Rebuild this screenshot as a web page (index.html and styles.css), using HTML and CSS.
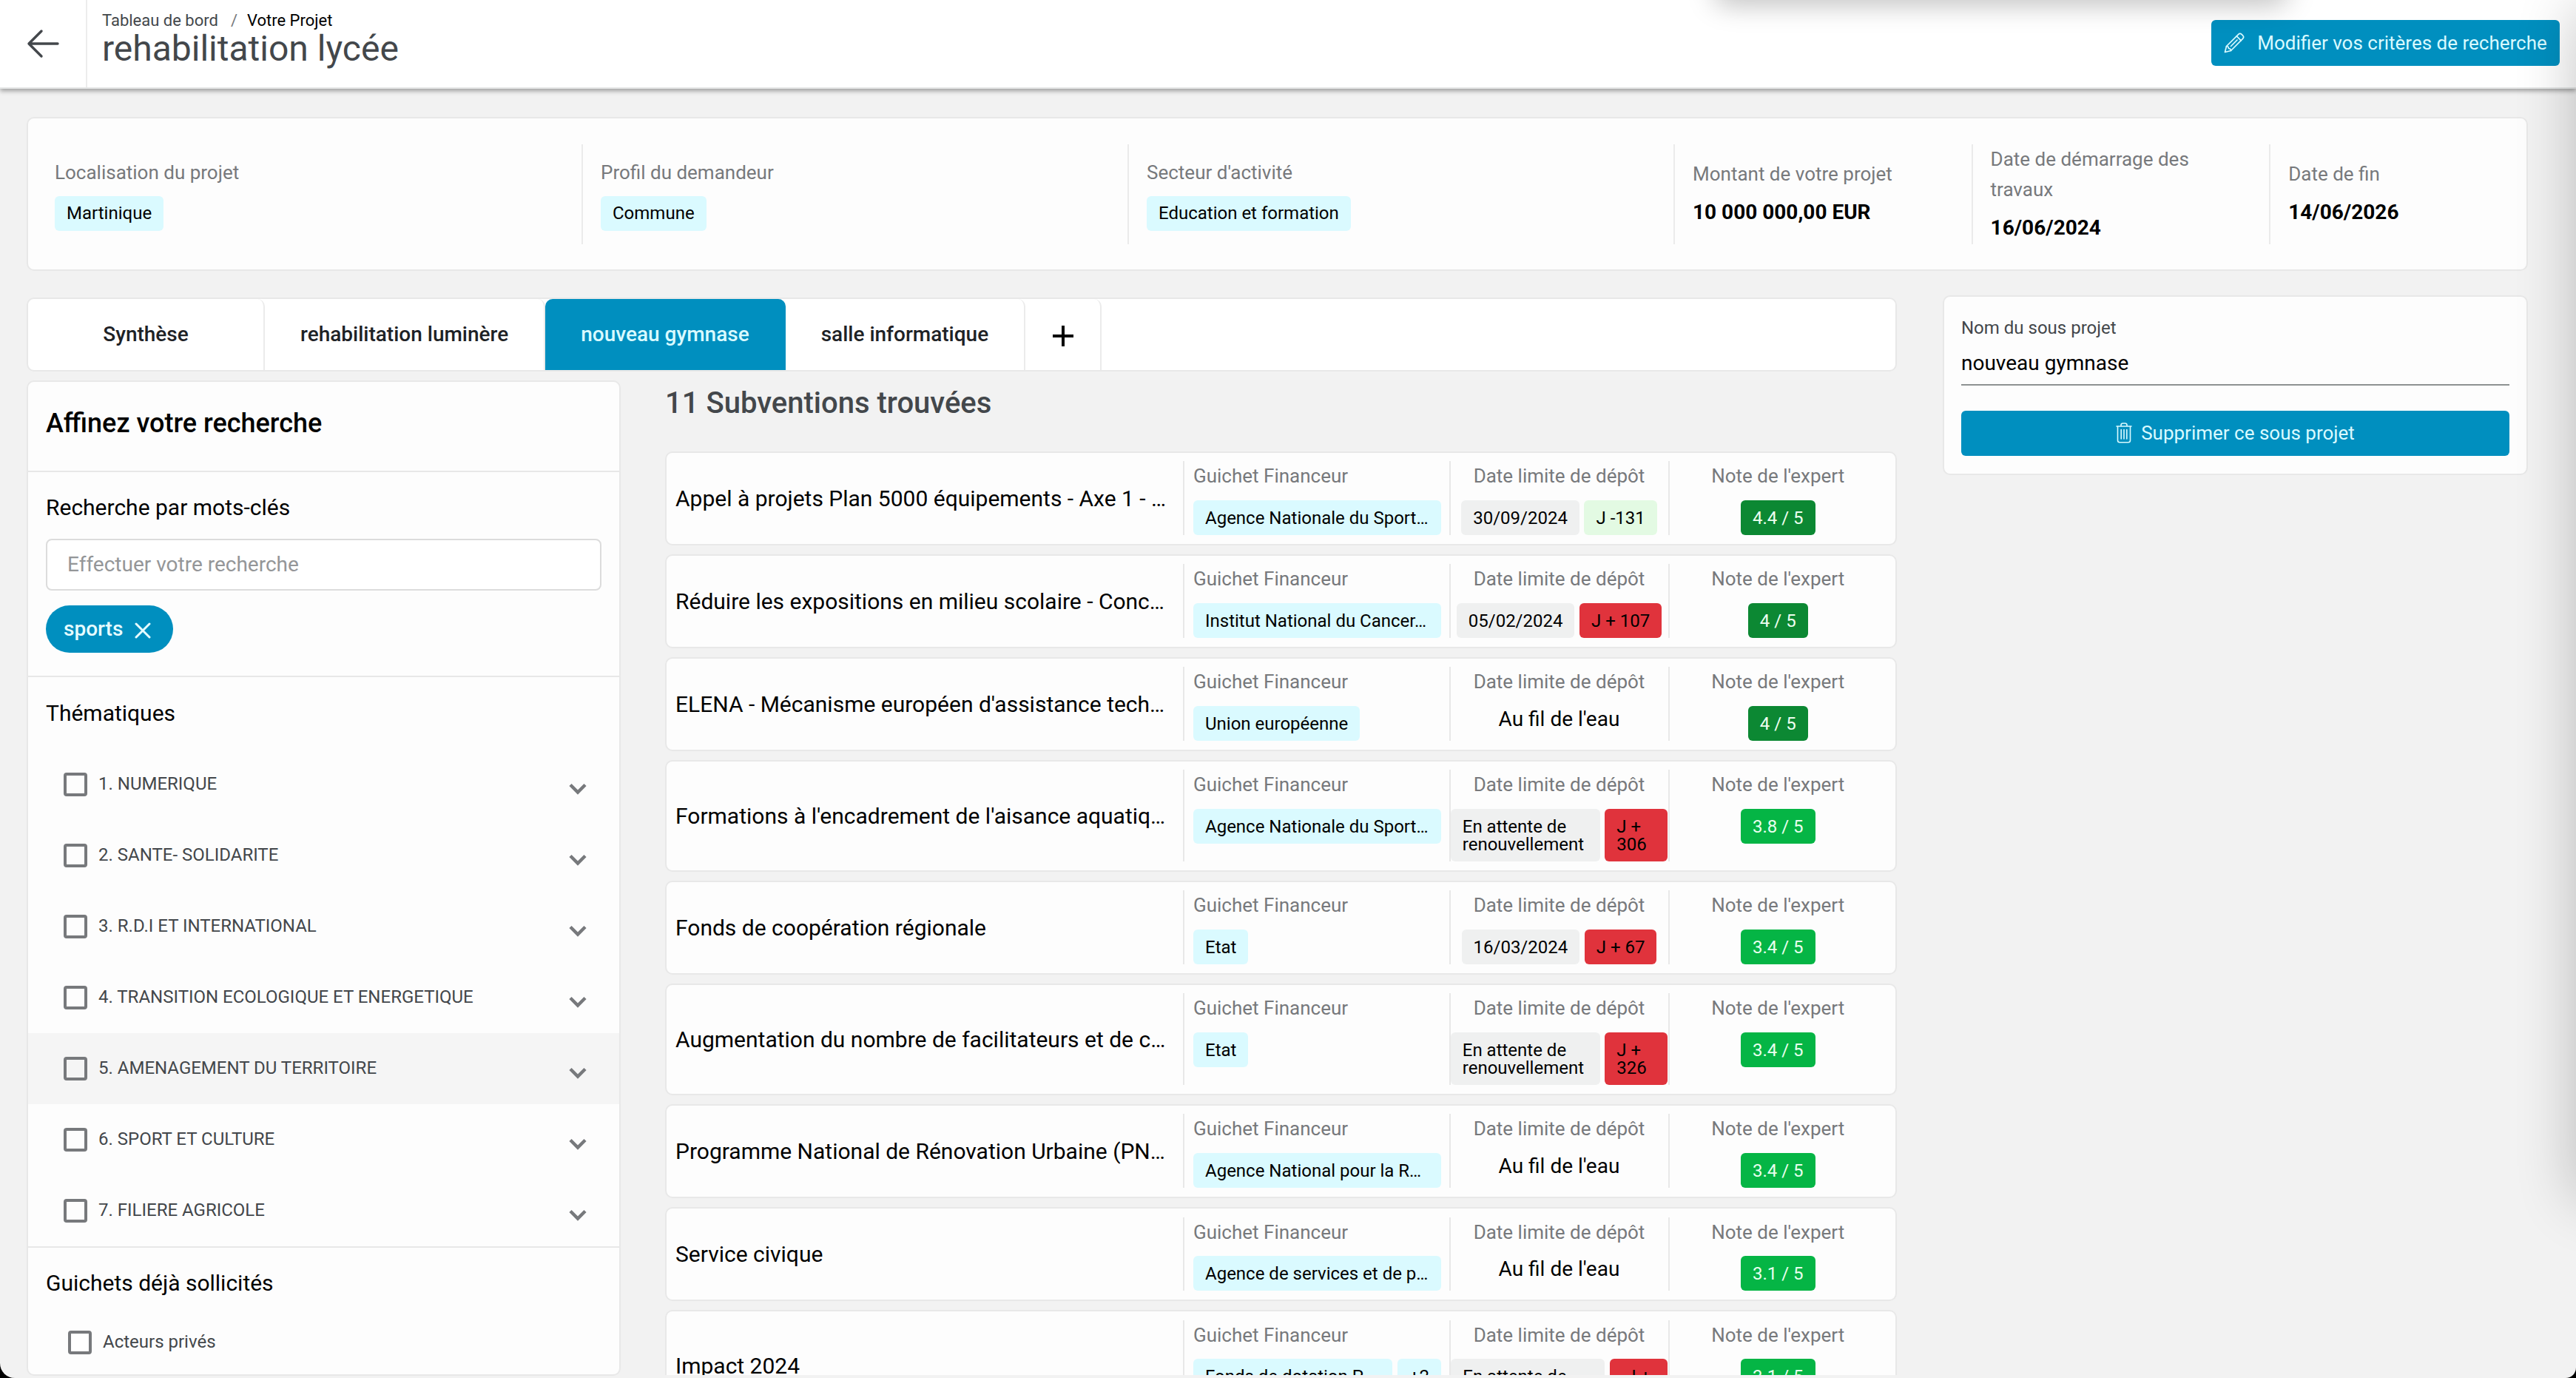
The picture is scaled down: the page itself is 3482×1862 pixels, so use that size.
FILE: index.html
```html
<!DOCTYPE html>
<html lang="fr">
<head>
  <meta charset="UTF-8">
  <meta name="viewport" content="width=device-width, initial-scale=1.0">
  <title>rehabilitation lycée - Votre Projet</title>
  <link rel="stylesheet" href="styles.css">
</head>
<body>
  <div class="page">
    <header class="topbar">
      <a class="back" href="#" aria-label="Retour">
        <svg width="44" height="40" viewBox="0 0 44 40" fill="none" stroke="#43474b" stroke-width="3.4" stroke-linecap="round" stroke-linejoin="round">
          <path d="M42 20H3M20 3L3 20l17 17"/>
        </svg>
      </a>
      <div class="titles">
        <nav class="breadcrumb"><span>Tableau de bord</span><span class="sep">/</span><span class="current">Votre Projet</span></nav>
        <h1>rehabilitation lycée</h1>
      </div>
      <button class="btn btn-edit">
        <svg width="28" height="28" viewBox="0 0 28 28" fill="none" stroke="#d9faff" stroke-width="1.7" stroke-linejoin="round" stroke-linecap="round">
          <path d="M1.500 26.500l2-8L19.500 2.600c1.500-1.500 3.500-1.200 4.800 0l1.200 1.200c1.300 1.300 1.300 3.300 0 4.600L9.500 24.500z"/>
          <path d="M17.300 4.800l6 6M3.500 18.500c1.700 0 3 .6 3 3 2 0 3 1.200 3 3M9.500 18.500l8.500-8.500"/>
        </svg>
        <span>Modifier vos critères de recherche</span>
      </button>
    </header>

    <section class="card summary">
      <div class="summary-item">
        <div class="label">Localisation du projet</div>
        <span class="badge cyan">Martinique</span>
      </div>
      <div class="summary-item">
        <div class="label">Profil du demandeur</div>
        <span class="badge cyan">Commune</span>
      </div>
      <div class="summary-item">
        <div class="label">Secteur d'activité</div>
        <span class="badge cyan">Education et formation</span>
      </div>
      <div class="summary-item">
        <div class="label">Montant de votre projet</div>
        <strong>10 000 000,00 EUR</strong>
      </div>
      <div class="summary-item">
        <div class="label">Date de démarrage des travaux</div>
        <strong>16/06/2024</strong>
      </div>
      <div class="summary-item">
        <div class="label">Date de fin</div>
        <strong>14/06/2026</strong>
      </div>
    </section>

    <div class="columns">
      <main class="main">
        <nav class="card tabs">
          <a class="tab first">Synthèse</a>
          <a class="tab">rehabilitation luminère</a>
          <a class="tab active">nouveau gymnase</a>
          <a class="tab">salle informatique</a>
          <a class="tab add" aria-label="Ajouter">
            <svg width="28" height="28" viewBox="0 0 28 28" stroke="#000" stroke-width="4"><path d="M14 0v28M0 14h28"/></svg>
          </a>
        </nav>

        <div class="results">
          <aside class="card filters">
            <h2>Affinez votre recherche</h2>

            <div class="filter-search">
              <h3>Recherche par mots-clés</h3>
              <input class="search" type="text" placeholder="Effectuer votre recherche">
              <span class="chip">sports
                <svg width="22" height="22" viewBox="0 0 22 22" stroke="#e6fcff" stroke-width="3" stroke-linecap="round"><path d="M2 2l18 18M20 2L2 20"/></svg>
              </span>
            </div>

            <div class="filter-themes">
              <h3>Thématiques</h3>
              <ul>
                <li><i class="check"></i><span>1. NUMERIQUE</span><svg class="chevron" viewBox="0 0 24 16"><path d="M2 2.500l10 10 10-10"/></svg></li>
                <li><i class="check"></i><span>2. SANTE- SOLIDARITE</span><svg class="chevron" viewBox="0 0 24 16"><path d="M2 2.500l10 10 10-10"/></svg></li>
                <li><i class="check"></i><span>3. R.D.I ET INTERNATIONAL</span><svg class="chevron" viewBox="0 0 24 16"><path d="M2 2.500l10 10 10-10"/></svg></li>
                <li><i class="check"></i><span>4. TRANSITION ECOLOGIQUE ET ENERGETIQUE</span><svg class="chevron" viewBox="0 0 24 16"><path d="M2 2.500l10 10 10-10"/></svg></li>
                <li class="hover"><i class="check"></i><span>5. AMENAGEMENT DU TERRITOIRE</span><svg class="chevron" viewBox="0 0 24 16"><path d="M2 2.500l10 10 10-10"/></svg></li>
                <li><i class="check"></i><span>6. SPORT ET CULTURE</span><svg class="chevron" viewBox="0 0 24 16"><path d="M2 2.500l10 10 10-10"/></svg></li>
                <li><i class="check"></i><span>7. FILIERE AGRICOLE</span><svg class="chevron" viewBox="0 0 24 16"><path d="M2 2.500l10 10 10-10"/></svg></li>
              </ul>
            </div>

            <div class="filter-desks">
              <h3>Guichets déjà sollicités</h3>
              <div class="desk"><i class="check"></i><span>Acteurs privés</span></div>
            </div>
          </aside>

          <section class="list">
            <h2>11 Subventions trouvées</h2>

            <article class="card grant">
              <div class="name">Appel à projets Plan 5000 équipements - Axe 1 - …</div>
              <div class="funder"><div class="label">Guichet Financeur</div><div class="badges"><span class="badge cyan full">Agence Nationale du Sport…</span></div></div>
              <div class="deadline"><div class="label">Date limite de dépôt</div><div class="badges"><span class="badge grey">30/09/2024</span><span class="badge mint">J -131</span></div></div>
              <div class="score"><div class="label">Note de l'expert</div><span class="badge dark-green">4.4 / 5</span></div>
            </article>

            <article class="card grant">
              <div class="name">Réduire les expositions en milieu scolaire - Conc…</div>
              <div class="funder"><div class="label">Guichet Financeur</div><div class="badges"><span class="badge cyan full">Institut National du Cancer…</span></div></div>
              <div class="deadline"><div class="label">Date limite de dépôt</div><div class="badges"><span class="badge grey">05/02/2024</span><span class="badge red">J + 107</span></div></div>
              <div class="score"><div class="label">Note de l'expert</div><span class="badge dark-green">4 / 5</span></div>
            </article>

            <article class="card grant">
              <div class="name">ELENA - Mécanisme européen d'assistance tech…</div>
              <div class="funder"><div class="label">Guichet Financeur</div><div class="badges"><span class="badge cyan">Union européenne</span></div></div>
              <div class="deadline"><div class="label">Date limite de dépôt</div><p>Au fil de l'eau</p></div>
              <div class="score"><div class="label">Note de l'expert</div><span class="badge dark-green">4 / 5</span></div>
            </article>

            <article class="card grant">
              <div class="name">Formations à l'encadrement de l'aisance aquatiq…</div>
              <div class="funder"><div class="label">Guichet Financeur</div><div class="badges"><span class="badge cyan full">Agence Nationale du Sport…</span></div></div>
              <div class="deadline"><div class="label">Date limite de dépôt</div><div class="badges"><span class="badge grey wait">En attente de renouvellement</span><span class="badge red late">J + 306</span></div></div>
              <div class="score"><div class="label">Note de l'expert</div><span class="badge green">3.8 / 5</span></div>
            </article>

            <article class="card grant">
              <div class="name">Fonds de coopération régionale</div>
              <div class="funder"><div class="label">Guichet Financeur</div><div class="badges"><span class="badge cyan">Etat</span></div></div>
              <div class="deadline"><div class="label">Date limite de dépôt</div><div class="badges"><span class="badge grey">16/03/2024</span><span class="badge red">J + 67</span></div></div>
              <div class="score"><div class="label">Note de l'expert</div><span class="badge green">3.4 / 5</span></div>
            </article>

            <article class="card grant">
              <div class="name">Augmentation du nombre de facilitateurs et de c…</div>
              <div class="funder"><div class="label">Guichet Financeur</div><div class="badges"><span class="badge cyan">Etat</span></div></div>
              <div class="deadline"><div class="label">Date limite de dépôt</div><div class="badges"><span class="badge grey wait">En attente de renouvellement</span><span class="badge red late">J + 326</span></div></div>
              <div class="score"><div class="label">Note de l'expert</div><span class="badge green">3.4 / 5</span></div>
            </article>

            <article class="card grant">
              <div class="name">Programme National de Rénovation Urbaine (PN…</div>
              <div class="funder"><div class="label">Guichet Financeur</div><div class="badges"><span class="badge cyan full">Agence National pour la R…</span></div></div>
              <div class="deadline"><div class="label">Date limite de dépôt</div><p>Au fil de l'eau</p></div>
              <div class="score"><div class="label">Note de l'expert</div><span class="badge green">3.4 / 5</span></div>
            </article>

            <article class="card grant">
              <div class="name">Service civique</div>
              <div class="funder"><div class="label">Guichet Financeur</div><div class="badges"><span class="badge cyan full">Agence de services et de p…</span></div></div>
              <div class="deadline"><div class="label">Date limite de dépôt</div><p>Au fil de l'eau</p></div>
              <div class="score"><div class="label">Note de l'expert</div><span class="badge green">3.1 / 5</span></div>
            </article>

            <article class="card grant">
              <div class="name">Impact 2024</div>
              <div class="funder"><div class="label">Guichet Financeur</div><div class="badges"><span class="badge cyan full">Fonds de dotation P…</span><span class="badge cyan">+2</span></div></div>
              <div class="deadline"><div class="label">Date limite de dépôt</div><div class="badges"><span class="badge grey wait wide">En attente de renouvellement</span><span class="badge red late short">J + 5</span></div></div>
              <div class="score"><div class="label">Note de l'expert</div><span class="badge green">3.1 / 5</span></div>
            </article>
          </section>
        </div>
      </main>

      <aside class="card subproject">
        <label for="subname">Nom du sous projet</label>
        <input id="subname" type="text" value="nouveau gymnase">
        <button class="btn btn-delete">
          <svg width="22" height="28" viewBox="0 0 22 28" fill="none" stroke="#d9faff" stroke-width="1.600" stroke-linecap="round">
            <path d="M1 5h20M7 5V3.500C7 2 8 1 9.500 1h3C14 1 15 2 15 3.500V5M2.500 5v19c0 1.700 1 2.800 2.800 2.800h11.400c1.800 0 2.800-1.100 2.800-2.800V5M7.200 9.500v12.500M11 9.500v12.500M14.800 9.500v12.500"/>
          </svg>
          <span>Supprimer ce sous projet</span>
        </button>
      </aside>
    </div>

    <div class="overlay-top"></div>
    <div class="overlay-right"></div>
  </div>
</body>
</html>
```
FILE: styles.css
```css
* {
  box-sizing: border-box;
}
html {
  background: #000;
}
body {
  margin: 0;
  font-family: Roboto, sans-serif;
  font-size: 28px;
  line-height: 1.5715;
  color: #000;
}
h1, h2, h3, p, ul {
  margin: 0;
  padding: 0;
}
button, input {
  font-family: inherit;
}
.page {
  position: relative;
  height: 1862px;
  overflow: hidden;
  background: #f2f2f2;
  border-radius: 0 0 14px 20px;
}

/* Header */
.topbar {
  display: flex;
  align-items: center;
  height: 120px;
  background: #fff;
  border-bottom: 2px solid #e4e6e6;
  box-shadow: 0 3px 6px rgba(0, 0, 0, 0.35);
  padding-right: 22px;
}
.back {
  display: flex;
  align-items: center;
  width: 118px;
  height: 118px;
  padding-left: 36px;
  border-right: 2px solid #ececec;
}
.titles {
  flex: 1;
  align-self: flex-start;
  padding: 11px 0 0 20px;
}
.breadcrumb {
  font-size: 22px;
  line-height: 34px;
  color: #43474b;
}
.breadcrumb .sep {
  margin: 0 13px 0 17px;
  color: #77797c;
}
.breadcrumb .current {
  color: #000;
}
h1 {
  font-size: 48px;
  line-height: 42px;
  font-weight: 400;
  color: #43474b;
}
.btn {
  display: flex;
  align-items: center;
  justify-content: center;
  border: none;
  border-radius: 6px;
  background: #008fbf;
  color: #d9faff;
  font-size: 26px;
  cursor: pointer;
}
.btn-edit {
  width: 471px;
  height: 62px;
  gap: 17px;
  margin-bottom: 3px;
}

/* Cards */
.card {
  background: #fdfdfd;
  border: 2px solid #e8e8e8;
  border-radius: 10px;
}
.label {
  font-size: 26px;
  color: #77797c;
}
.badge {
  display: inline-block;
  padding: 11.5px 16px;
  border-radius: 6px;
  font-size: 24px;
  line-height: 24px;
  white-space: nowrap;
}
.cyan { background: #dafaff; }
.grey { background: #eff0f0; }
.mint { background: #e3fae3; }
.red { background: #e0333c; }
.dark-green { background: #0c8833; color: #eefff0; }
.green { background: #05b545; color: #e8ffee; }

.summary {
  display: grid;
  grid-template-columns: 740px 738px 738px 402.600px 402.600px 1fr;
  margin: 38px 65px 0 36px;
  padding: 35px 0 34px 10px;
}
.summary-item {
  display: flex;
  flex-direction: column;
  justify-content: center;
  align-items: flex-start;
  padding: 0 24px;
  border-right: 2px solid #ebebeb;
}
.summary-item:first-child {
  padding-left: 26px;
}
.summary-item:last-child {
  border-right: none;
}
.summary-item .badge {
  margin-top: 11px;
}
.summary-item strong {
  margin-top: 9px;
}

.columns {
  display: flex;
  align-items: flex-start;
  margin: 33px 65px 0 36px;
}
.main {
  width: 2528px;
  margin: 3px 62px 0 0;
}

/* Tabs */
.tabs {
  display: flex;
  height: 100px;
  background: #fff;
}
.tab {
  display: flex;
  align-items: center;
  padding: 0 48px;
  border-right: 2px solid #ebebeb;
  border-radius: 10px 10px 0 0;
  font-weight: 500;
  color: #1e2226;
}
.tab.first {
  width: 320px;
  justify-content: center;
}
.tab.active {
  padding-right: 47px;
  background: #008fbf;
  border-color: #008fbf;
  color: #d9faff;
}
.tab.add {
  padding: 4px 36px 0 37px;
}

.results {
  display: flex;
  align-items: flex-start;
  margin-top: 12px;
}

/* Filters */
.filters {
  width: 803px;
  height: 1345px;
  margin-right: 60px;
}
.filters h2 {
  height: 122px;
  padding: 31px 24px 0;
  font-size: 36px;
  line-height: 50px;
  font-weight: 500;
  border-bottom: 2px solid #e8e8e8;
}
.filters h3 {
  padding-left: 24px;
  font-size: 30px;
  line-height: 46px;
  font-weight: 400;
}
.filter-search {
  height: 277px;
  padding-top: 25px;
  border-bottom: 2px solid #e8e8e8;
}
.search {
  display: block;
  width: 751px;
  height: 70px;
  margin: 19px 0 20px 24px;
  padding: 0 27px;
  border: 2px solid #dcdcdc;
  border-radius: 8px;
  background: #fff;
  font-size: 28px;
}
.search::placeholder {
  color: #949698;
}
.chip {
  display: inline-flex;
  align-items: center;
  gap: 16px;
  height: 64px;
  margin-left: 24px;
  padding: 0 30px 0 24px;
  border-radius: 32px;
  background: #008fbf;
  color: #e6fcff;
  font-weight: 500;
}
.chip svg {
  margin-top: 4px;
}
.filter-themes {
  padding-top: 26px;
  border-bottom: 2px solid #e8e8e8;
}
.filter-themes ul {
  margin-top: 25px;
  list-style: none;
}
.filter-themes li {
  display: flex;
  align-items: center;
  height: 96px;
  padding: 0 44px 0 48px;
  font-size: 24px;
  color: #43474b;
}
.filter-themes li.hover {
  background: #f5f5f5;
}
.filter-themes li span {
  flex: 1;
}
.check {
  width: 32px;
  height: 32px;
  margin-right: 15px;
  border: 4px solid #77797c;
  border-radius: 4px;
  background: #fff;
}
.filter-themes .check {
  background: none;
}
.chevron {
  width: 24px;
  height: 16px;
  margin-top: 12px;
  fill: none;
  stroke: #77797c;
  stroke-width: 4.500;
}
.filter-desks {
  padding-top: 25px;
}
.desk {
  display: flex;
  align-items: center;
  height: 64px;
  margin-top: 25px;
  padding-left: 54px;
  font-size: 24px;
  color: #43474b;
}

/* Grants */
.list {
  width: 1665px;
  height: 1344px;
  overflow: hidden;
}
.list h2 {
  height: 96px;
  font-size: 40px;
  line-height: 62px;
  font-weight: 500;
  color: #43474b;
}
.grant {
  display: grid;
  grid-template-columns: 700px 359.500px 296px 1fr;
  margin-bottom: 12px;
  padding: 11.600px 0;
}
.grant .name {
  display: flex;
  align-items: center;
  padding-left: 12px;
  font-size: 30px;
  white-space: nowrap;
  border-right: 2px solid #e8e8e8;
}
.funder {
  padding: 0 10.500px 0 12px;
  border-right: 2px solid #e8e8e8;
}
.badges {
  display: flex;
  align-items: flex-start;
  gap: 6.500px;
  margin-top: 12px;
}
.badge.full {
  flex: 1;
}
.deadline {
  text-align: center;
  border-right: 2px solid #e8e8e8;
}
.deadline .badges {
  justify-content: center;
}
.deadline p {
  margin-top: 8px;
}
.badge.wait,
.badge.late {
  white-space: normal;
  text-align: left;
}
.badge.wait {
  width: 202px;
}
.badge.wide {
  width: 208px;
}
.badge.late {
  width: 85px;
}
.badge.short {
  width: 78px;
  text-align: center;
}
.score {
  padding-right: 12px;
  text-align: center;
}
.score .badge {
  margin-top: 12px;
}

/* Sub project */
.subproject {
  width: 792px;
  height: 243px;
  padding: 23px 23px 0;
}
.subproject label {
  display: block;
  font-size: 24px;
  line-height: 38px;
  color: #43474b;
}
.subproject input {
  display: block;
  width: 100%;
  height: 59px;
  padding: 0;
  border: none;
  border-bottom: 2px solid #8e9292;
  background: none;
  font-size: 28px;
}
.btn-delete {
  width: 100%;
  height: 61px;
  gap: 12px;
  margin-top: 34px;
}

/* Shadows cast by the floating windows around the page */
.overlay-top {
  position: absolute;
  top: -40px;
  left: 2316px;
  width: 778px;
  height: 40px;
  border-radius: 20px;
  box-shadow: 0 6px 36px rgba(0, 0, 0, 0.26);
}
.overlay-right {
  position: absolute;
  top: 10px;
  right: -80px;
  width: 80px;
  height: 1610px;
  box-shadow: 0 0 80px rgba(0, 0, 0, 0.24);
}
```
